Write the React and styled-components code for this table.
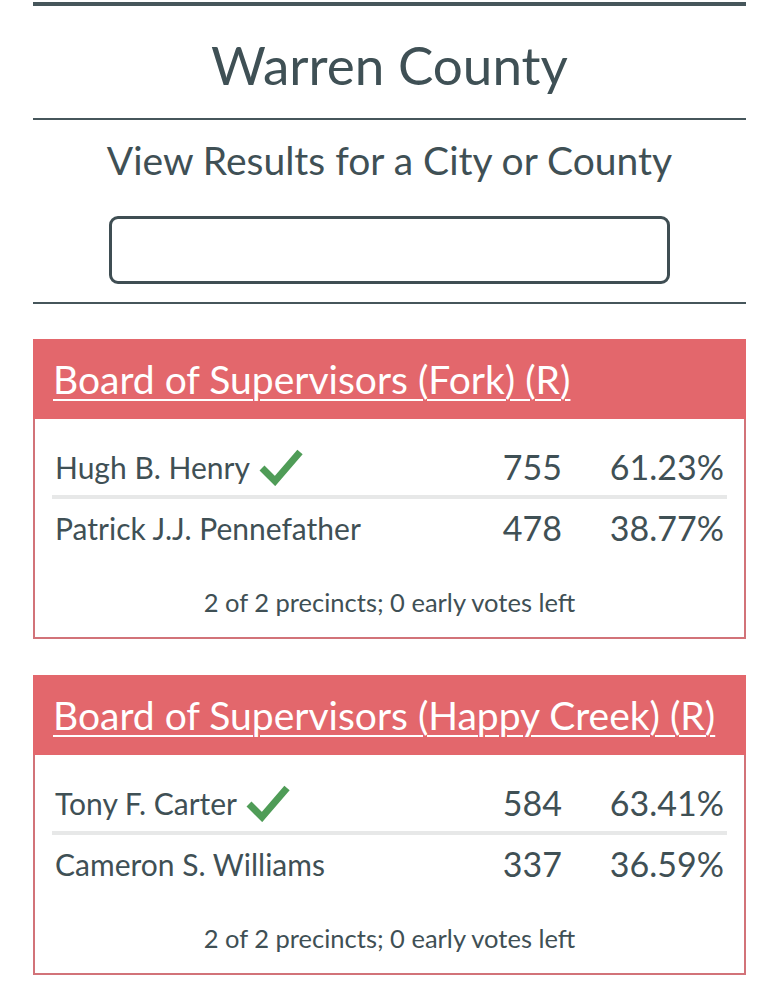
import React from 'react';
import styled, { createGlobalStyle } from 'styled-components';

const GlobalStyle = createGlobalStyle`
  body {
    margin: 0;
    background: #ffffff;
    font-family: Lato, "Open Sans", sans-serif;
    color: #3f5055;
  }
`;

// === Page layout ===
const Page = styled.div`
  width: 713px;
  margin-left: 33px;
  padding-top: 2px;
`;

const Rule = styled.hr`
  margin: 0;
  border: none;
  height: ${({ thick }) => (thick ? '4px' : '2px')};
  background: #46565b;
`;

const Title = styled.h1`
  margin: 0;
  height: 112px;
  display: flex;
  align-items: center;
  justify-content: center;
  font-size: 53px;
  font-weight: 400;
  padding-top: 4px;
  box-sizing: border-box;
`;

const Search = styled.div`
  display: flex;
  flex-direction: column;
  align-items: center;
  padding: 17px 0 18px;
`;

const SearchLabel = styled.h2`
  margin: 0;
  font-size: 39px;
  font-weight: 400;
  line-height: 46px;
`;

const SearchInput = styled.input`
  margin-top: 33px;
  width: 561px;
  height: 68px;
  box-sizing: border-box;
  border: 3px solid #3f4e53;
  border-radius: 9px;
  outline: none;
  font-family: inherit;
  font-size: 24px;
  padding: 0 14px;
`;

const Races = styled.div`
  display: flex;
  flex-direction: column;
  gap: 36px;
  padding-top: 35px;
`;

// === Race card ===
const Card = styled.section`
  display: flex;
  flex-direction: column;
`;

const CardHeader = styled.div`
  background: #e3676c;
  height: 80px;
  display: flex;
  align-items: center;
  padding: 0 20px;

  a {
    color: #ffffff;
    font-size: 39px;
    line-height: 46px;
    text-decoration: underline;
    text-decoration-thickness: 2px;
    text-underline-offset: 5px;
    white-space: nowrap;
  }
`;

const CardBody = styled.div`
  border: 2px solid #d27379;
  border-top: none;
  padding: 19px 17px 0;
`;

const Row = styled.div`
  display: grid;
  grid-template-columns: 1fr auto 165px;
  align-items: center;
  height: 57px;
  font-size: 30px;
  border-bottom: ${({ last }) => (last ? 'none' : '4px solid #e7e8e8')};
`;

const Name = styled.div`
  display: flex;
  align-items: center;
  gap: 8px;
  padding-left: 3px;
`;

const Votes = styled.div`
  text-align: right;
  font-size: 34px;
`;

const Pct = styled.div`
  text-align: right;
  font-size: 34px;
  padding-right: 3px;
`;

const Footer = styled.div`
  text-align: center;
  font-size: 25.5px;
  line-height: 28px;
  padding: 32px 0 21px;
`;

const Check = () => (
  <svg width="46" height="38" viewBox="0 0 46 38">
    <path
      d="M4 20 L17 33 L42 4"
      fill="none"
      stroke="#4f9c57"
      strokeWidth="7"
      strokeLinejoin="miter"
    />
  </svg>
);

const races = [
  {
    title: 'Board of Supervisors (Fork) (R)',
    candidates: [
      { name: 'Hugh B. Henry', votes: 755, pct: '61.23%', winner: true },
      { name: 'Patrick J.J. Pennefather', votes: 478, pct: '38.77%' },
    ],
  },
  {
    title: 'Board of Supervisors (Happy Creek) (R)',
    candidates: [
      { name: 'Tony F. Carter', votes: 584, pct: '63.41%', winner: true },
      { name: 'Cameron S. Williams', votes: 337, pct: '36.59%' },
    ],
  },
];

const App = () => (
  <>
    <GlobalStyle />
    <Page>
      <Rule thick />
      <Title>Warren County</Title>
      <Rule />
      <Search>
        <SearchLabel>View Results for a City or County</SearchLabel>
        <SearchInput type="text" />
      </Search>
      <Rule />
      <Races>
        {races.map((race) => (
          <Card key={race.title}>
            <CardHeader>
              <a href="#">{race.title}</a>
            </CardHeader>
            <CardBody>
              {race.candidates.map((c, i) => (
                <Row key={c.name} last={i === race.candidates.length - 1}>
                  <Name>
                    {c.name}
                    {c.winner && <Check />}
                  </Name>
                  <Votes>{c.votes}</Votes>
                  <Pct>{c.pct}</Pct>
                </Row>
              ))}
              <Footer>2 of 2 precincts; 0 early votes left</Footer>
            </CardBody>
          </Card>
        ))}
      </Races>
    </Page>
  </>
);

export default App;
